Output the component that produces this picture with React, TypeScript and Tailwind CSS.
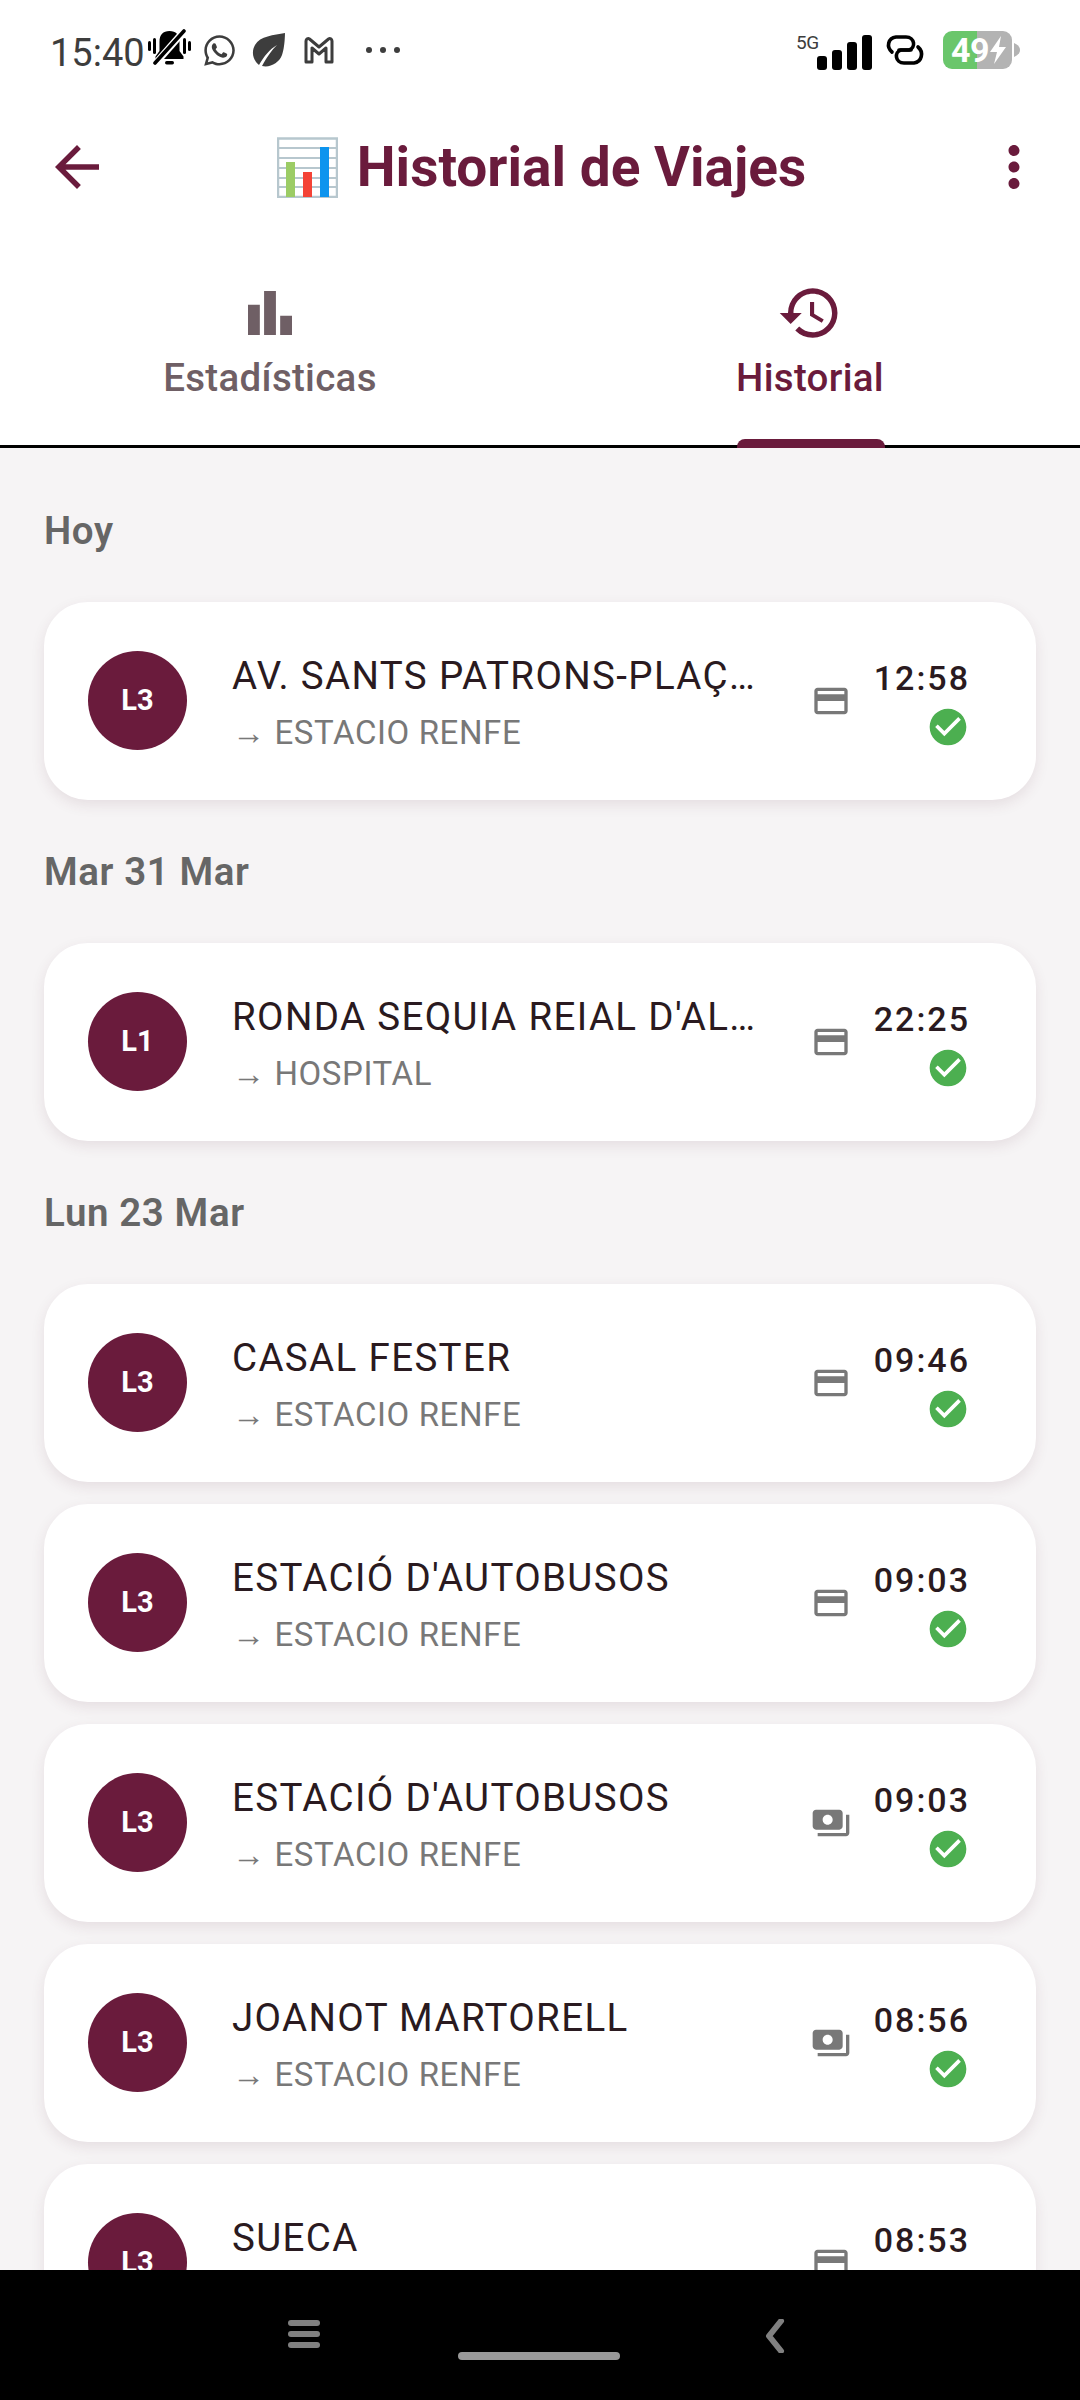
import React from "react";
import { MdArrowBack, MdMoreVert, MdHistory, MdCreditCard, MdPayments, MdCheckCircle } from "react-icons/md";
import { FaWhatsapp } from "react-icons/fa";

type Trip = { line: string; stop: string; dest: string; time: string; cash?: boolean };

const sections: { label: string; trips: Trip[] }[] = [
  { label: "Hoy", trips: [{ line: "L3", stop: "AV. SANTS PATRONS-PLAÇ…", dest: "ESTACIO RENFE", time: "12:58" }] },
  { label: "Mar 31 Mar", trips: [{ line: "L1", stop: "RONDA SEQUIA REIAL D'AL…", dest: "HOSPITAL", time: "22:25" }] },
  {
    label: "Lun 23 Mar",
    trips: [
      { line: "L3", stop: "CASAL FESTER", dest: "ESTACIO RENFE", time: "09:46" },
      { line: "L3", stop: "ESTACIÓ D'AUTOBUSOS", dest: "ESTACIO RENFE", time: "09:03" },
      { line: "L3", stop: "ESTACIÓ D'AUTOBUSOS", dest: "ESTACIO RENFE", time: "09:03", cash: true },
      { line: "L3", stop: "JOANOT MARTORELL", dest: "ESTACIO RENFE", time: "08:56", cash: true },
      { line: "L3", stop: "SUECA", dest: "ESTACIO RENFE", time: "08:53" },
    ],
  },
];

function StatusBar() {
  return (
    <div className="h-[100px] flex items-center shrink-0 pl-[50px] text-[#3d3d3d]">
      <span className="text-[38px] leading-none font-normal w-[98px] mt-[5px]">15:40</span>
      <svg width="43" height="40" viewBox="0 0 43 40" className="mt-[-2px]">
        <path d="M21.5 2c-6.500 0-10 4-10 10.500v9.500l-4 5.500v2.500h28v-2.500l-4-5.500v-9.500c0-6.500-3.500-10.500-10-10.500z" fill="#000" />
        <rect x="17" y="32" width="9" height="3.500" rx="1.700" fill="#000" />
        <path d="M7 35 L37 1" stroke="#fff" strokeWidth="7" />
        <path d="M7 34 L36 2" stroke="#000" strokeWidth="3.600" strokeLinecap="round" />
        <rect x="0" y="12" width="3" height="10" rx="1.500" fill="#000" />
        <rect x="5" y="9" width="3" height="16" rx="1.500" fill="#000" />
        <rect x="35" y="9" width="3" height="16" rx="1.500" fill="#000" />
        <rect x="40" y="12" width="3" height="10" rx="1.500" fill="#000" />
      </svg>
      <FaWhatsapp className="ml-[11px] w-[35px] h-[35px] text-[#3d3d3d]" />
      <svg width="34" height="34" viewBox="0 0 34 34" className="ml-[15px]">
        <path d="M33 0C33 0 33 14 30 22C27 30 18 35 10 33C15 24 19 18 25 12C18 16 12 23 7 32C1 27 -1 19 3 12C8 3 22 2 33 0Z" fill="#3d3d3d" />
      </svg>
      <svg width="34" height="30" viewBox="0 0 34 30" className="ml-[16px]">
        <path d="M4 27V6c0-2 2-3 3.500-2L17 12l9.500-8c1.500-1 3.500 0 3.500 2v21h-6V13l-7 6-7-6v14z" fill="none" stroke="#3d3d3d" strokeWidth="3" strokeLinejoin="round" />
      </svg>
      <div className="ml-[30px] flex gap-[8px]">
        <span className="w-[6px] h-[6px] rounded-full bg-[#3d3d3d]" />
        <span className="w-[6px] h-[6px] rounded-full bg-[#3d3d3d]" />
        <span className="w-[6px] h-[6px] rounded-full bg-[#3d3d3d]" />
      </div>
      <span className="ml-auto text-[19px] leading-none self-start mt-[33px] w-[21px] text-[#3d3d3d] tracking-[-0.5px]">5G</span>
      <div className="flex items-end gap-[5px] h-[35px] mt-[5px]">
        <span className="w-[10px] h-[14px] rounded-[3px] bg-black" />
        <span className="w-[10px] h-[20px] rounded-[3px] bg-black" />
        <span className="w-[10px] h-[28px] rounded-[3px] bg-black" />
        <span className="w-[10px] h-[35px] rounded-[3px] bg-black" />
      </div>
      <svg width="40" height="30" viewBox="0 0 40 30" className="ml-[13px]">
        <path d="M7 17 C1 12 3 3 11 2 H21 C30 2 31 13 24 15 H14" fill="none" stroke="#000" strokeWidth="3.600" strokeLinecap="round" />
        <path d="M33 12 C39 17 37 27 29 28 H19 C10 28 9 17 16 15 H26" fill="none" stroke="#000" strokeWidth="3.600" strokeLinecap="round" />
      </svg>
      <div className="ml-[18px] mr-[68px] relative w-[69px] h-[38px] rounded-[9px] overflow-visible flex">
        <div className="w-[34px] h-full bg-[#6ac66b] rounded-l-[9px]" />
        <div className="flex-1 h-full bg-[#b3b3b3] rounded-r-[9px]" />
        <div className="absolute inset-0 flex items-center pl-[8px] text-white font-bold text-[34px] leading-none tracking-[-0.5px]">
          49
          <svg width="20" height="30" viewBox="0 0 20 30" className="ml-[-1px]">
            <path d="M13 1 L2 17 H9 L6 29 L18 12 H11 Z" fill="#fff" />
          </svg>
        </div>
        <svg width="6" height="14" viewBox="0 0 6 14" className="absolute left-[71px] top-[12px]">
          <path d="M0 0 C4 2 6 4 6 7 C6 10 4 12 0 14 Z" fill="#b3b3b3" />
        </svg>
      </div>
    </div>
  );
}

function AppBar() {
  return (
    <div className="h-[135px] flex items-center shrink-0 pl-[44px] pr-[33px] text-[#6a1b3c]">
      <MdArrowBack className="w-[66px] h-[66px] mt-[-2px]" />
      <div className="flex-1 flex items-center justify-center gap-[19px] mr-[8px]">
        <svg width="61" height="61" viewBox="0 0 61 61">
          <rect x="0" y="0" width="61" height="61" fill="#fff" />
          <path d="M1 1.500H60V60H1Z" fill="none" stroke="#b7c7ce" strokeWidth="2.500" />
          <path d="M2 11H60M2 21H60M2 31H60M2 41H60M2 50H60" stroke="#b7c7ce" strokeWidth="1.800" />
          <rect x="9" y="25" width="9" height="35" fill="#9ccc65" />
          <rect x="26" y="35" width="9" height="25" fill="#f44336" />
          <rect x="43" y="10" width="9" height="50" fill="#0d94ee" />
        </svg>
        <span className="text-[55px] leading-none font-bold">Historial de Viajes</span>
      </div>
      <MdMoreVert className="w-[66px] h-[66px] mt-[-2px]" />
    </div>
  );
}

function Tabs() {
  return (
    <div className="h-[213px] flex shrink-0 border-b-[3px] border-black relative z-10">
      <div className="w-1/2 flex flex-col items-center pt-[45px]">
        <svg width="66" height="66" viewBox="0 0 24 24" fill="#6f5f65">
          <path d="M4 9h4.300v11H4zM15.700 13H20v7h-4.300zM9.850 4h4.300v16h-4.300z" />
        </svg>
        <span className="text-[38.500px] leading-[50px] font-medium text-[#6f5f65] mt-[7px] tracking-[0.3px]">Estadísticas</span>
      </div>
      <div className="w-1/2 flex flex-col items-center pt-[45px] relative">
        <MdHistory className="w-[66px] h-[66px] text-[#6a1b3c]" />
        <span className="text-[38.500px] leading-[50px] font-medium text-[#6a1b3c] mt-[7px] tracking-[0.3px]">Historial</span>
        <span className="absolute bottom-[-3px] left-[197px] w-[148px] h-[9px] rounded-t-[8px] bg-[#6a1b3c]" />
      </div>
    </div>
  );
}

function TripCard({ trip }: { trip: Trip }) {
  const Pay = trip.cash ? MdPayments : MdCreditCard;
  return (
    <div className="h-[198px] shrink-0 rounded-[44px] bg-white flex items-center pl-[44px] pr-[66px] shadow-[0_5px_14px_rgba(90,40,60,0.10)]">
      <div className="w-[99px] h-[99px] rounded-full bg-[#6a1b3c] flex items-center justify-center shrink-0 text-white text-[29px] font-bold leading-none mt-[-1px]">
        {trip.line}
      </div>
      <div className="ml-[45px] flex-1 min-w-0 flex flex-col">
        <span className="text-[38.500px] leading-[50px] text-[#2a1a20] whitespace-nowrap tracking-[1.350px] h-[50px] mt-[2px]">{trip.stop}</span>
        <span className="text-[33px] leading-[42px] text-[#787878] whitespace-nowrap tracking-[0.600px] mt-[11px]">→ {trip.dest}</span>
      </div>
      <Pay className="w-[40px] h-[40px] text-[#787878] shrink-0 mr-[24px]" />
      <div className="flex flex-col items-end shrink-0 w-[95px] mt-[4px]">
        <span className="text-[34px] leading-[42px] font-[480] text-[#2a1a20] tracking-[2px] whitespace-nowrap">{trip.time}</span>
        <MdCheckCircle className="w-[44px] h-[44px] text-[#4caf50] mt-[6px]" />
      </div>
    </div>
  );
}

export default function App() {
  return (
    <div className="w-[1080px] h-[2400px] flex flex-col bg-white overflow-hidden font-['Roboto',sans-serif]">
      <StatusBar />
      <AppBar />
      <Tabs />
      <main className="flex-1 min-h-0 overflow-hidden bg-[#f6f4f5] px-[44px] pt-[58px] flex flex-col">
        {sections.map((s, i) => (
          <section key={s.label} className={i > 0 ? "mt-[47px] flex flex-col" : "flex flex-col"}>
            <h2 className="text-[38.500px] leading-[50px] h-[50px] font-semibold text-[#666666] mb-[46px] tracking-[0.6px]">{s.label}</h2>
            <div className="flex flex-col gap-[22px]">
              {s.trips.map((t, j) => (
                <TripCard key={j} trip={t} />
              ))}
            </div>
          </section>
        ))}
      </main>
      <nav className="h-[130px] bg-black shrink-0 flex items-start pl-[288px]">
        <div className="flex flex-col gap-[5px] mt-[50px] w-[32px]">
          <span className="h-[6px] rounded-full bg-[#808080]" />
          <span className="h-[6px] rounded-full bg-[#808080]" />
          <span className="h-[6px] rounded-full bg-[#808080]" />
        </div>
        <span className="ml-[138px] mt-[82px] w-[162px] h-[8px] rounded-full bg-[#999999]" />
        <svg width="22" height="34" viewBox="0 0 22 34" className="ml-[143px] mt-[49px]">
          <path d="M18 2 L6 17 L18 32" fill="none" stroke="#808080" strokeWidth="6" strokeLinecap="round" strokeLinejoin="round" />
        </svg>
      </nav>
    </div>
  );
}
